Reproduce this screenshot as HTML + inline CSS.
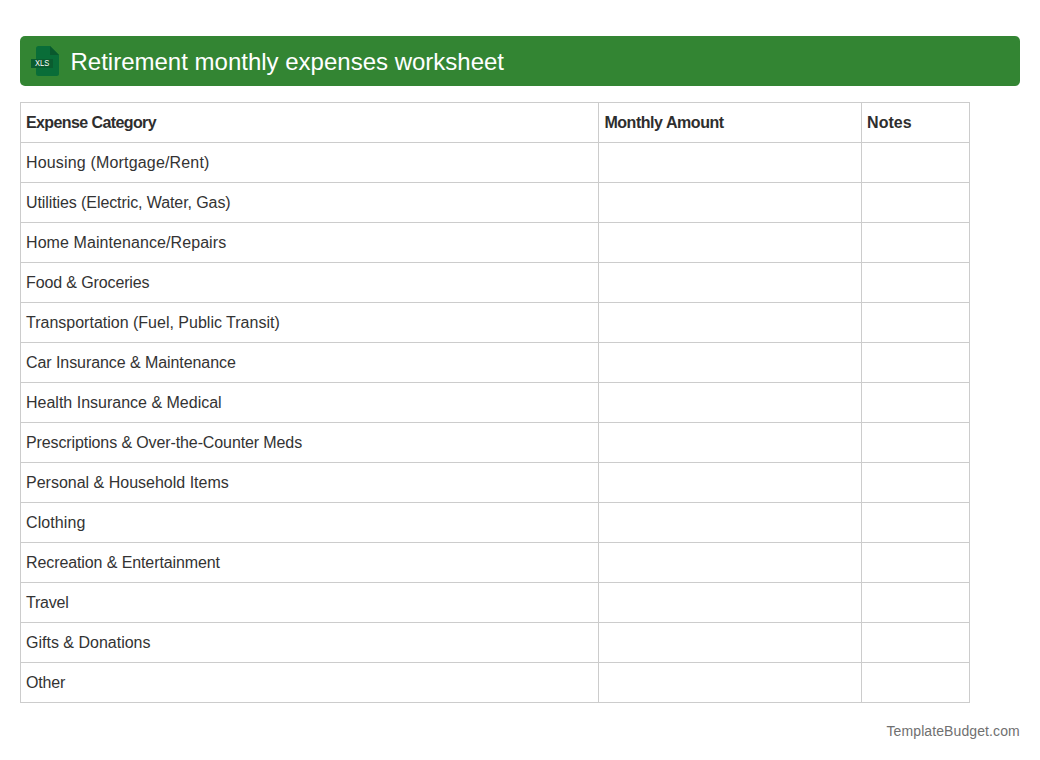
<!DOCTYPE html>
<html><head><meta charset="utf-8">
<style>
html,body{margin:0;padding:0;background:#fff;}
body{width:1040px;height:760px;position:relative;overflow:hidden;font-family:"Liberation Sans",sans-serif;}
.hdr{position:absolute;left:20px;top:36px;width:1000px;height:50px;background:#338533;border-radius:5px;}
.hdr svg{position:absolute;left:11px;top:10px;}
.title{position:absolute;left:50.5px;top:1px;line-height:50px;font-size:24px;color:#fff;white-space:nowrap;}
table{position:absolute;left:20px;top:102px;border-collapse:collapse;width:950px;}
td,th{border:1px solid #cccccc;height:40px;padding:0 0 0 5px;font-size:16px;color:#333;text-align:left;vertical-align:middle;box-sizing:border-box;white-space:nowrap;}
th{font-weight:bold;color:#2e2e2e;}
th.c1{letter-spacing:-0.6px;}th.c2{letter-spacing:-0.45px;}
.c1{width:579px;}.c2{width:263px;}.c3{width:108px;}
.foot{position:absolute;left:886.5px;top:723px;font-size:14px;letter-spacing:0.1px;color:#707070;white-space:nowrap;}
</style></head><body>
<div class="hdr">
<svg width="30" height="32" viewBox="0 0 30 32">
<path d="M5 2.5 Q5 0 7.5 0 H19 L28 9 V27.5 Q28 30 25.5 30 H7.5 Q5 30 5 27.5 Z" fill="#096D38"/>
<path d="M19 0 L28 9 H19 Z" fill="#09592D"/>
<rect x="0" y="13" width="22" height="9" fill="#0A5C2F"/>
<text x="3.9" y="20" font-family="Liberation Sans" font-size="8.2" fill="#fff" textLength="14.3" lengthAdjust="spacingAndGlyphs">XLS</text>
</svg>
<div class="title">Retirement monthly expenses worksheet</div>
</div>
<table>
<tr><th class="c1">Expense Category</th><th class="c2">Monthly Amount</th><th class="c3">Notes</th></tr>
<tr><td style="letter-spacing:0.17px">Housing (Mortgage/Rent)</td><td></td><td></td></tr>
<tr><td style="letter-spacing:-0.09px">Utilities (Electric, Water, Gas)</td><td></td><td></td></tr>
<tr><td style="letter-spacing:0.08px">Home Maintenance/Repairs</td><td></td><td></td></tr>
<tr><td style="letter-spacing:-0.12px">Food &amp; Groceries</td><td></td><td></td></tr>
<tr><td>Transportation (Fuel, Public Transit)</td><td></td><td></td></tr>
<tr><td style="letter-spacing:-0.07px">Car Insurance &amp; Maintenance</td><td></td><td></td></tr>
<tr><td>Health Insurance &amp; Medical</td><td></td><td></td></tr>
<tr><td style="letter-spacing:-0.11px">Prescriptions &amp; Over-the-Counter Meds</td><td></td><td></td></tr>
<tr><td>Personal &amp; Household Items</td><td></td><td></td></tr>
<tr><td style="letter-spacing:0.1px">Clothing</td><td></td><td></td></tr>
<tr><td style="letter-spacing:-0.1px">Recreation &amp; Entertainment</td><td></td><td></td></tr>
<tr><td style="letter-spacing:-0.2px">Travel</td><td></td><td></td></tr>
<tr><td>Gifts &amp; Donations</td><td></td><td></td></tr>
<tr><td style="letter-spacing:-0.15px">Other</td><td></td><td></td></tr>
</table>
<div class="foot">TemplateBudget.com</div>
</body></html>
